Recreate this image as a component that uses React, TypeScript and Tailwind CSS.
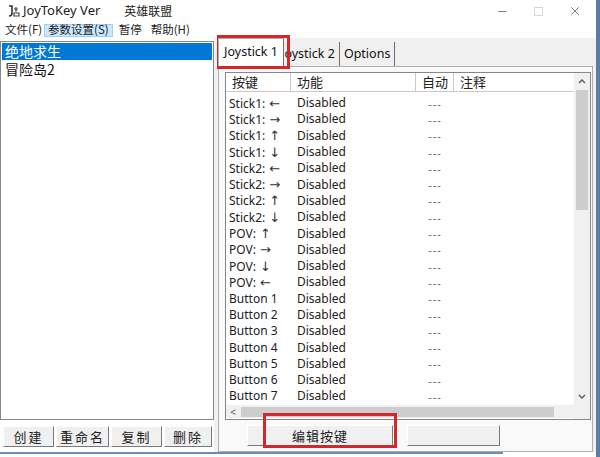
import { Minus, X } from 'lucide-react';

const keys: [string, string][] = [
  ['Stick1:', '←'], ['Stick1:', '→'], ['Stick1:', '↑'], ['Stick1:', '↓'],
  ['Stick2:', '←'], ['Stick2:', '→'], ['Stick2:', '↑'], ['Stick2:', '↓'],
  ['POV:', '↑'], ['POV:', '→'], ['POV:', '↓'], ['POV:', '←'],
  ['Button 1', ''], ['Button 2', ''], ['Button 3', ''], ['Button 4', ''],
  ['Button 5', ''], ['Button 6', ''], ['Button 7', ''],
];

function ClassicButton({ label, className }: { label: string; className: string }) {
  return (
    <div
      className={`flex items-center justify-center bg-[#f0f0f0] border border-t-white border-l-white border-r-[#7a7a7a] border-b-[#7a7a7a] text-[#222] ${className}`}
    >
      {label}
    </div>
  );
}

function AppIcon() {
  return (
    <svg width="14" height="14" viewBox="0 0 14 14" className="shrink-0">
      <path d="M3 2 L6 2 L6 9 Q6 12 3 12" stroke="#333" strokeWidth="1.6" fill="none" />
      <path d="M8 5 L12 5 M10 3 L10 8 M8 9 L13 9 L13 12 L8 12 Z" stroke="#444" strokeWidth="1.2" fill="none" />
    </svg>
  );
}

export default function App() {
  return (
    <div className="relative w-[600px] h-[457px] overflow-hidden bg-white font-['Noto_Sans','Noto_Sans_CJK_SC',sans-serif] text-[#111]">
      {/* Title bar */}
      <div className="h-[22px] flex items-center pl-[6px] pr-[18px] bg-white">
        <AppIcon />
        <span className="ml-[3px] text-[13px] text-[#222]">JoyToKey Ver</span>
        <span className="ml-[24px] text-[12px] font-['Noto_Sans_CJK_SC',sans-serif] text-[#222]">英雄联盟</span>
        <div className="ml-auto flex items-center gap-[25px]">
          <Minus size={13} strokeWidth={1.2} className="text-[#333]" />
          <div className="w-[9px] h-[9px] border border-[#d6d6d6]" />
          <X size={14} strokeWidth={1.1} className="text-[#333]" />
        </div>
      </div>

      {/* Menu bar */}
      <div className="h-[16px] flex items-center text-[11.5px] font-['Noto_Sans_CJK_SC',sans-serif] text-[#222]">
        <span className="pl-[5px] w-[44px]">文件(F)</span>
        <span className="h-[13px] px-[3px] flex items-center bg-[#cce8ff] border border-[#99d1ff] leading-none">参数设置(S)</span>
        <span className="ml-[6px]">暂停</span>
        <span className="ml-[9px]">帮助(H)</span>
      </div>

      {/* Body */}
      <div className="h-[414px] flex bg-[#f0f0f0]">
        {/* Left column */}
        <div className="w-[214px] flex flex-col bg-white">
          <div className="mt-[3px] h-[379px] border border-[#828790] bg-white pt-[1px] px-[1px] font-['Noto_Sans_CJK_SC',sans-serif] text-[14px] leading-[17px]">
            <div className="pl-[3px] bg-[#0078d7] text-white">绝地求生</div>
            <div className="pl-[3px] mt-[1px]">冒险岛2</div>
          </div>
          <div className="mt-[6px] flex items-center gap-[2px] pl-[3px] font-['Noto_Sans_CJK_SC',sans-serif] text-[13px] tracking-[2px]">
            <ClassicButton label="创建" className="w-[51px] h-[21px]" />
            <ClassicButton label="重命名" className="w-[53px] h-[21px]" />
            <ClassicButton label="复制" className="w-[51px] h-[21px]" />
            <ClassicButton label="删除" className="w-[48px] h-[21px]" />
          </div>
        </div>

        {/* Right column */}
        <div className="flex-1 flex flex-col pl-[4px] pr-[7px]">
          {/* Tabs */}
          <div className="h-[28px] flex items-end text-[12.5px] text-[#111]">
            <div className="relative z-10 h-[28px] w-[66px] flex items-center justify-center bg-white border border-b-0 border-[#adadad] border-r-[#6d6d6d]">
              Joystick 1
            </div>
            <div className="h-[24px] -ml-[3px] pr-[4px] flex items-center border-r border-[#6d6d6d]">Joystick 2</div>
            <div className="h-[24px] px-[4px] flex items-center border-r border-[#6d6d6d]">Options</div>
          </div>

          {/* Tab page */}
          <div className="flex-1 flex flex-col bg-[#f9f9f9] border border-[#adadad] pl-[6px] pr-[1px] pt-[5px]">
            <div className="h-[348px] flex border border-[#828790] bg-white">
              <div className="flex-1 flex flex-col min-w-0">
                {/* Header */}
                <div className="h-[19px] flex font-['Noto_Sans_CJK_SC',sans-serif] text-[13px] text-[#222] border-b border-[#c8c8c8]">
                  <div className="w-[65px] pl-[6px] border-r border-[#c8c8c8] flex items-center">按键</div>
                  <div className="w-[125px] pl-[6px] border-r border-[#c8c8c8] flex items-center">功能</div>
                  <div className="w-[38px] pl-[6px] border-r border-[#c8c8c8] flex items-center">自动</div>
                  <div className="flex-1 pl-[6px] flex items-center">注释</div>
                </div>
                {/* Rows */}
                <div className="mt-[3px] h-[310px] overflow-hidden text-[12px] text-[#222]">
                  {keys.map(([k, arrow]) => (
                    <div key={k + arrow} className="h-[16.3px] flex items-center leading-none">
                      <div className="w-[65px] pl-[3px] whitespace-nowrap">
                        {k}
                        {arrow && <span className="ml-[4px] font-['DejaVu_Sans',sans-serif] text-[13px] text-[#333]">{arrow}</span>}
                      </div>
                      <div className="w-[125px] pl-[6px]">Disabled</div>
                      <div className="w-[38px] text-center text-[#666] tracking-[1px] text-[11px]">---</div>
                    </div>
                  ))}
                </div>
                {/* Horizontal scrollbar */}
                <div className="h-[13px] flex items-center bg-[#f0f0f0]">
                  <span className="w-[14px] text-center text-[10px] text-[#555] leading-none">&lt;</span>
                  <div className="ml-[1px] w-[313px] h-[10px] bg-[#cdcdcd]" />
                </div>
              </div>
              {/* Vertical scrollbar */}
              <div className="w-[16px] flex flex-col bg-[#f0f0f0]">
                <div className="h-[17px] flex items-center justify-center">
                  <svg width="8" height="5" viewBox="0 0 8 5"><path d="M1 4 L4 1 L7 4" stroke="#555" strokeWidth="1.3" fill="none" /></svg>
                </div>
                <div className="mx-[2px] h-[120px] bg-[#cdcdcd]" />
                <div className="flex-1" />
                <div className="h-[17px] flex items-center justify-center">
                  <svg width="8" height="5" viewBox="0 0 8 5"><path d="M1 1 L4 4 L7 1" stroke="#555" strokeWidth="1.3" fill="none" /></svg>
                </div>
                <div className="h-[14px] bg-[#f0f0f0]" />
              </div>
            </div>
            {/* Bottom buttons */}
            <div className="mt-[5px] flex items-center pl-[22px] font-['Noto_Sans_CJK_SC',sans-serif] text-[13px] tracking-[1px]">
              <ClassicButton label="编辑按键" className="w-[146px] h-[21px]" />
              <ClassicButton label="" className="ml-[14px] w-[93px] h-[21px]" />
            </div>
          </div>
        </div>
      </div>

      {/* Bottom edge */}
      <div className="h-[2px] w-[503px] bg-[#6b8cb8]" />

      {/* Right window edge */}
      <div className="absolute top-0 right-0 w-[4px] h-[457px] bg-[#5b7da5]" />

      {/* Red annotation boxes */}
      <div className="absolute left-[217px] top-[35px] w-[73px] h-[34px] border-[3px] border-[#d0282c]" />
      <div className="absolute left-[263px] top-[413px] w-[134px] h-[35px] border-[3px] border-[#d0282c]" />
    </div>
  );
}
